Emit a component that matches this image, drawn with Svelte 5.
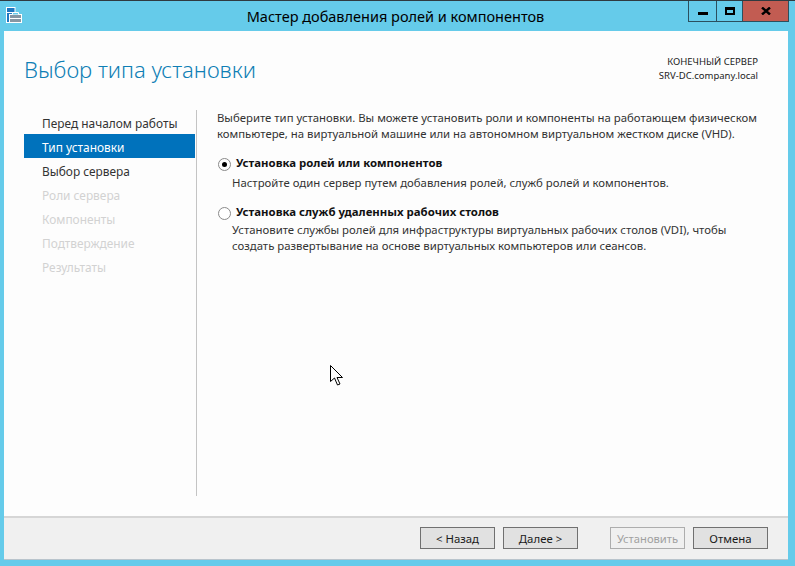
<script>
  const steps = [
    { label: "Перед началом работы", state: "normal" },
    { label: "Тип установки", state: "active" },
    { label: "Выбор сервера", state: "normal" },
    { label: "Роли сервера", state: "disabled" },
    { label: "Компоненты", state: "disabled" },
    { label: "Подтверждение", state: "disabled" },
    { label: "Результаты", state: "disabled" },
  ];
</script>

<div class="window">
  <div class="titlebar">
    <svg class="app-icon" width="17" height="17" viewBox="0 0 17 17">
      <rect x="0.5" y="0.5" width="8.5" height="15" fill="#1f78c1" stroke="#fff" />
      <path d="M1 5.5h8" stroke="#fff" />
      <rect x="3.5" y="7.5" width="12" height="8" fill="#8797a3" stroke="#fff" />
      <path d="M6.5 7.5V5.5h6v2" fill="#65cbea" stroke="#fff" />
      <path d="M4 11.5h11" stroke="#fff" />
    </svg>
    <div class="title">Мастер добавления ролей и компонентов</div>
    <div class="controls">
      <div class="ctl ctl-min"><span class="min-glyph"></span></div>
      <div class="ctl ctl-max"><span class="max-glyph"></span></div>
      <div class="ctl ctl-close">
        <svg width="10" height="8" viewBox="0 0 10 8">
          <path d="M1 0.5L9 7.5M9 0.5L1 7.5" stroke="#000" stroke-width="2.4" fill="none" />
        </svg>
      </div>
    </div>
  </div>

  <div class="client">
    <div class="content">
      <header class="head">
        <h1>Выбор типа установки</h1>
        <div class="server">
          <div>КОНЕЧНЫЙ СЕРВЕР</div>
          <div>SRV-DC.company.local</div>
        </div>
      </header>

      <div class="body">
        <nav class="steps">
          {#each steps as step}
            <div class="step {step.state}">{step.label}</div>
          {/each}
        </nav>

        <main class="main">
          <p class="intro">
            Выберите тип установки. Вы можете установить роли и компоненты на работающем физическом<br />
            компьютере, на виртуальной машине или на автономном виртуальном жестком диске (VHD).
          </p>

          <div class="option">
            <span class="radio checked"></span>
            <div>
              <div class="opt-title">Установка ролей или компонентов</div>
              <div class="opt-desc">Настройте один сервер путем добавления ролей, служб ролей и компонентов.</div>
            </div>
          </div>

          <div class="option second">
            <span class="radio"></span>
            <div>
              <div class="opt-title">Установка служб удаленных рабочих столов</div>
              <div class="opt-desc">
                Установите службы ролей для инфраструктуры виртуальных рабочих столов (VDI), чтобы<br />
                создать развертывание на основе виртуальных компьютеров или сеансов.
              </div>
            </div>
          </div>
        </main>
      </div>
    </div>

    <footer class="footer">
      <button class="btn">&lt; Назад</button>
      <button class="btn next">Далее &gt;</button>
      <button class="btn install" disabled>Установить</button>
      <button class="btn cancel">Отмена</button>
    </footer>
  </div>

  <!-- mouse pointer over the window -->
  <svg class="cursor" width="14" height="22" viewBox="0 0 14 22">
    <path d="M0.5 0.5V16.5L4.5 13L7.5 20L10 19L7 12.5H12.5Z" fill="#fff" stroke="#000" stroke-width="1" />
  </svg>
</div>

<style>
  :global(body) {
    margin: 0;
    background: #65cbea;
  }

  .window {
    position: relative;
    width: 795px;
    height: 566px;
    box-sizing: border-box;
    display: flex;
    flex-direction: column;
    background: #65cbea;
    border-top: 1px solid #2f3a40;
    font-family: "Noto Sans", sans-serif;
    font-size: 12px;
    color: #1a1a1a;
    overflow: hidden;
  }

  .titlebar {
    height: 30px;
    display: flex;
    position: relative;
    flex-shrink: 0;
  }

  .app-icon {
    position: absolute;
    left: 6px;
    top: 6px;
  }

  .title {
    flex: 1;
    text-align: center;
    font-size: 14.5px;
    line-height: 30px;
    color: #000;
    padding-right: 4px;
  }

  .controls {
    position: absolute;
    top: 0;
    right: 6px;
    display: flex;
    height: 21px;
    border: 1px solid #2b4f5e;
    border-top: none;
    box-sizing: border-box;
  }

  .ctl {
    display: flex;
    align-items: center;
    justify-content: center;
    box-sizing: border-box;
    height: 100%;
  }

  .ctl-min {
    width: 28px;
    border-right: 1px solid #2b4f5e;
  }

  .ctl-max {
    width: 26px;
    border-right: 1px solid #2b4f5e;
  }

  .ctl-close {
    width: 45px;
    background: #c25c52;
  }

  .min-glyph {
    width: 10px;
    height: 3px;
    margin-top: 5px;
    background: #000;
  }

  .max-glyph {
    width: 10px;
    height: 8px;
    box-sizing: border-box;
    border: 2px solid #000;
    border-top-width: 3px;
  }

  .client {
    flex: 1;
    margin: 0 7px 6px 4px;
    display: flex;
    flex-direction: column;
    background: #fdfdfd;
    border-bottom: 1px solid #b9c4cc;
    min-height: 0;
  }

  .content {
    flex: 1;
    min-height: 0;
  }

  .head {
    height: 79px;
    display: flex;
    justify-content: space-between;
    box-sizing: border-box;
    padding: 0 30px 0 20px;
  }

  h1 {
    margin: 0;
    padding-top: 22px;
    font-size: 22.1px;
    font-weight: 300;
    line-height: 32px;
    color: #0f7fb5;
  }

  .server {
    padding-top: 24px;
    text-align: right;
    font-size: 9.5px;
    line-height: 14px;
    color: #222;
  }

  .body {
    display: flex;
  }

  .steps {
    width: 171px;
    margin-left: 20px;
    flex-shrink: 0;
  }

  .step {
    height: 24px;
    line-height: 27px;
    padding-left: 18px;
    font-size: 11.9px;
    color: #333;
    overflow: hidden;
  }

  .step.active {
    background: #0072bc;
    color: #fff;
  }

  .step.disabled {
    color: #d2d2d2;
  }

  .main {
    margin-left: 1px;
    width: 570px;
    height: 386px;
    box-sizing: border-box;
    border-left: 1px solid #c4c4c4;
    padding-left: 20px;
  }

  .intro {
    margin: 0;
    font-size: 11.35px;
    line-height: 16px;
    color: #333;
  }

  .option {
    display: flex;
    margin-top: 13px;
    margin-left: 1px;
    gap: 5px;
  }

  .option.second {
    margin-top: 13px;
  }

  .option.second .opt-desc {
    margin-top: 2px;
  }

  .radio {
    width: 11px;
    height: 11px;
    margin-top: 3px;
    flex-shrink: 0;
    border: 1px solid #8a8a8a;
    border-radius: 50%;
    background: #fff;
    position: relative;
  }

  .radio.checked::after {
    content: "";
    position: absolute;
    left: 3px;
    top: 3px;
    width: 5px;
    height: 5px;
    border-radius: 50%;
    background: #000;
  }

  .opt-title {
    font-size: 11.42px;
    font-weight: 700;
    line-height: 16px;
    color: #111;
  }

  .opt-desc {
    font-size: 11.36px;
    line-height: 16px;
    color: #333;
    margin-top: 4px;
    margin-left: -4px;
  }

  .footer {
    height: 43px;
    flex-shrink: 0;
    box-sizing: border-box;
    border-top: 2px solid #d6d6d6;
    background: #f0f0f0;
    display: flex;
    align-items: flex-start;
    padding: 9px 20px 0 416px;
  }

  .btn {
    width: 75px;
    height: 22px;
    box-sizing: border-box;
    border: 1px solid #707070;
    background: #e1e1e1;
    font-family: inherit;
    font-size: 11.4px;
    color: #1a1a1a;
    padding: 0;
    margin: 0;
  }

  .next {
    margin-left: 8px;
  }

  .install {
    margin-left: 32px;
    background: #f0f0f0;
    border-color: #adadad;
    color: #a0a0a0;
    font-size: 11.2px;
  }

  .cancel {
    margin-left: 8px;
  }

  .cursor {
    position: absolute;
    left: 330px;
    top: 364px;
  }
</style>
